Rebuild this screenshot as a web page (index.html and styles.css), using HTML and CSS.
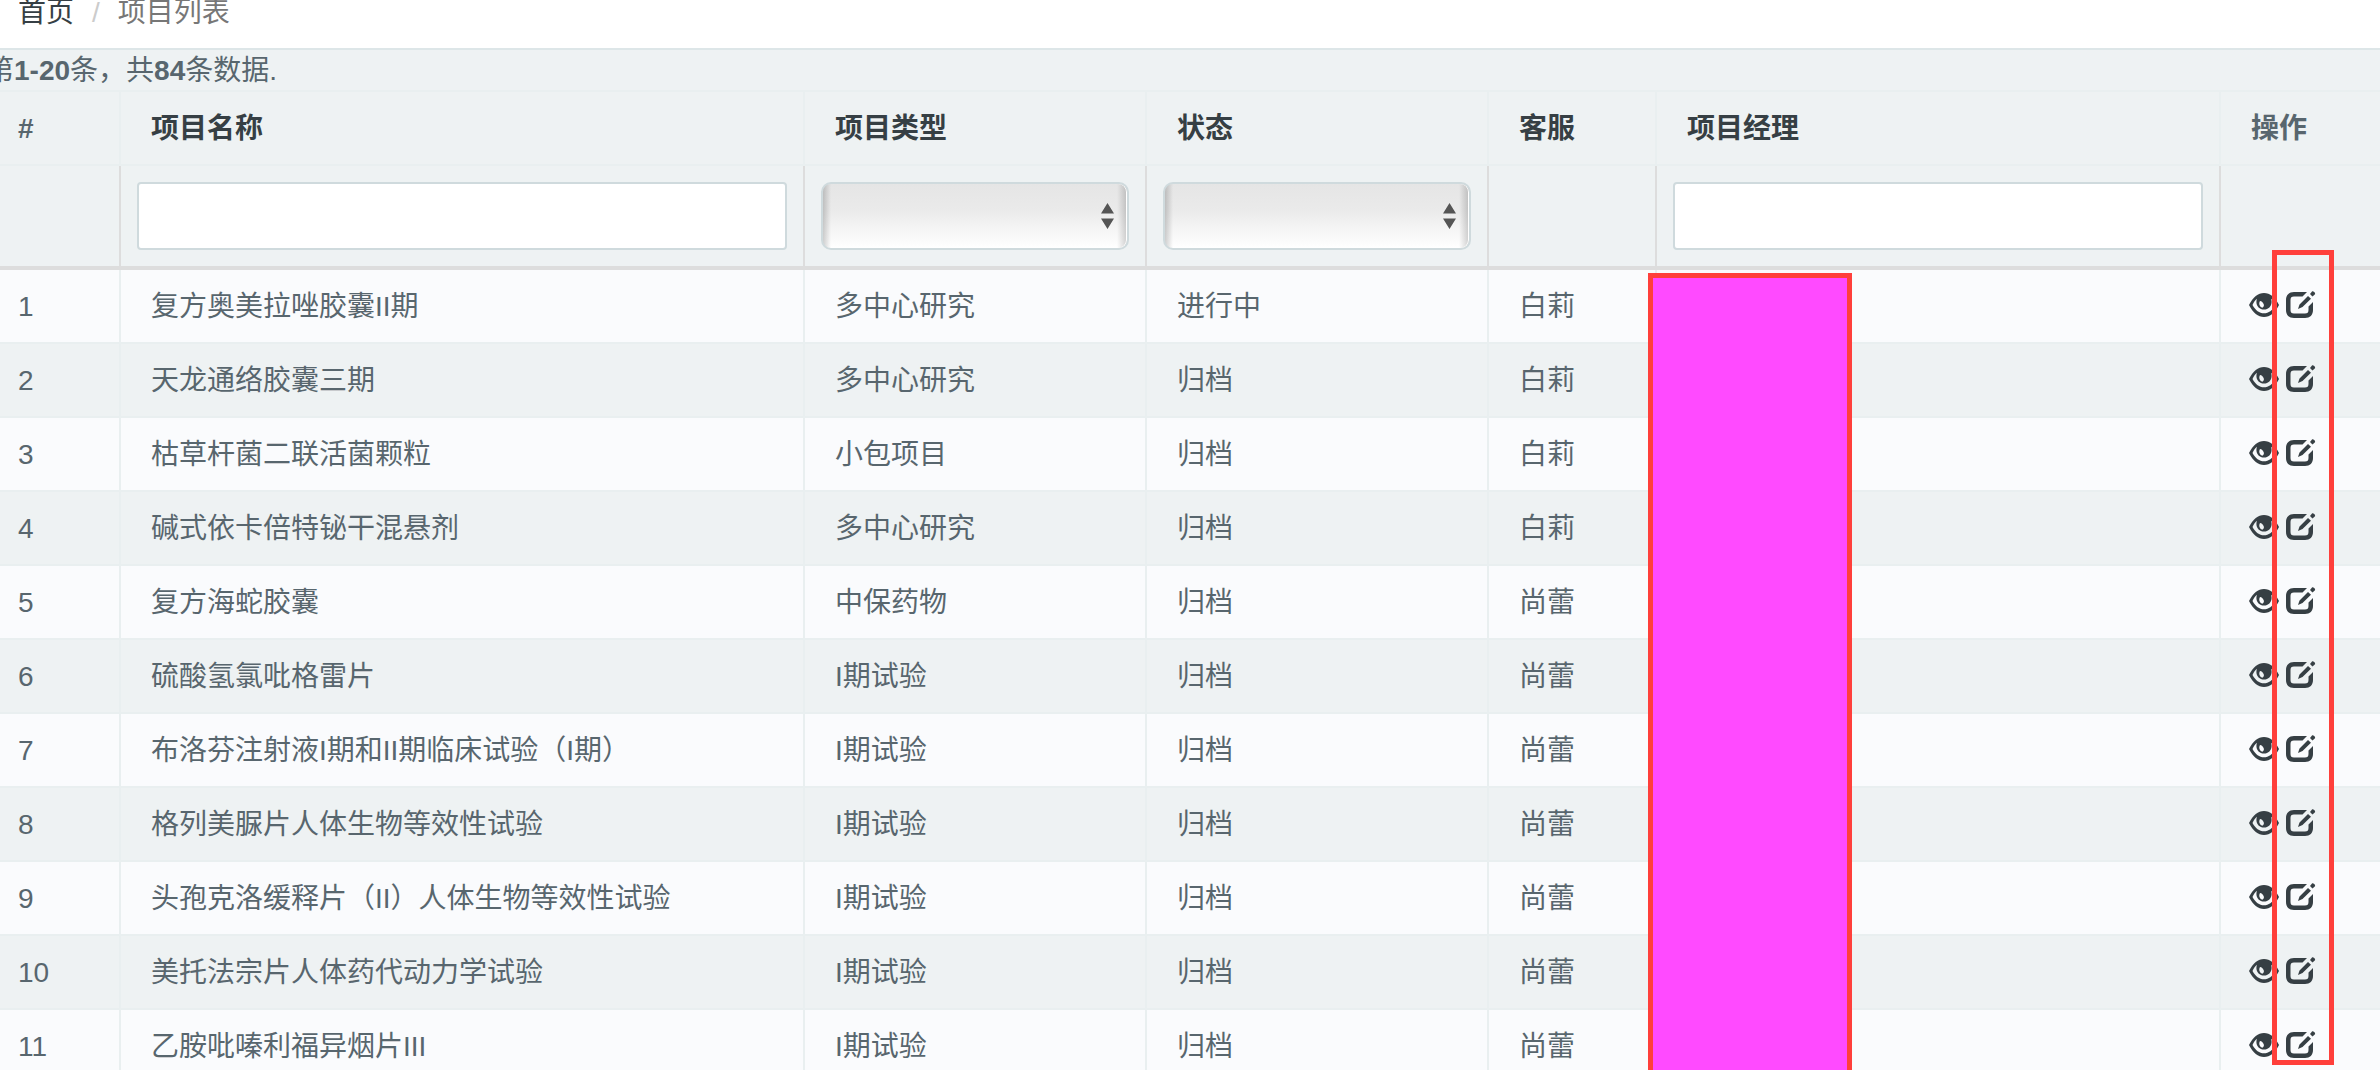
FILE: index.html
```html
<!DOCTYPE html>
<html lang="zh-CN">
<head>
<meta charset="utf-8">
<title>项目列表</title>
<link rel="stylesheet" href="styles.css">
</head>
<body>
<svg class="sprite" aria-hidden="true">
  <symbol id="eye" viewBox="0 0 30 24">
    <path fill-rule="evenodd" d="M0 12C4 4 9 0 15 0s11 4 15 12c-4 8-9 12-15 12S4 20 0 12zM3.500 12c3 5.500 6.800 8.300 11.500 8.300s8.500-2.800 11.500-8.300c-1-2.600-2.500-4.700-4.500-6.300.5 1.300.6 2 .6 3.200 0 4.400-3.300 7.600-7.600 7.600s-7.600-3.200-7.600-7.600c0-1.200.2-2.200.6-3.200C6 7.300 4.500 9.400 3.500 12zM11 8c-1.500 2.500-.5 5.800 2.300 6.800 1.600-.8 2-2.200 1.300-3.700C14 9.400 12.700 8.300 11 8z"/>
  </symbol>
  <symbol id="edit" viewBox="0 0 30 28">
    <path d="M21 1H8C3 1 0 4 0 9v10c0 5 3 8 8 8h11c5 0 8-3 8-8v-8l-4.500 4.500V19c0 2.500-1 3.500-3.500 3.500H8c-2.500 0-3.500-1-3.500-3.500V9c0-2.500 1-3.500 3.500-3.500h8.500z"/>
    <path d="M12 18l1.500-4.500 8.500-8.500 3 2.700L16.500 16zM24 3L26 .5c1-.8 3.800 1.500 3 2.800L26.500 5.500z"/>
  </symbol>
</svg>

<header class="topbar">
  <nav aria-label="面包屑">
    <ol class="breadcrumb">
      <li><a href="#">首页</a></li>
      <li class="current">项目列表</li>
    </ol>
  </nav>
</header>

<main class="content">
  <p class="summary">第<b>1-20</b>条，共<b>84</b>条数据.</p>
  <div class="grid-view">
    <table class="grid">
      <colgroup>
        <col class="col-no"><col class="col-name"><col class="col-type"><col class="col-type"><col class="col-service"><col class="col-manager"><col>
      </colgroup>
      <thead>
        <tr>
          <th>#</th>
          <th><a href="#">项目名称</a></th>
          <th><a href="#">项目类型</a></th>
          <th><a href="#">状态</a></th>
          <th><a href="#">客服</a></th>
          <th><a href="#">项目经理</a></th>
          <th>操作</th>
        </tr>
        <tr class="filters">
          <td></td>
          <td><input type="text" aria-label="项目名称"></td>
          <td><select aria-label="项目类型"><option></option></select></td>
          <td><select aria-label="状态"><option></option></select></td>
          <td></td>
          <td><input type="text" aria-label="项目经理"></td>
          <td></td>
        </tr>
      </thead>
      <tbody>
        <tr><td>1</td><td>复方奥美拉唑胶囊II期</td><td>多中心研究</td><td>进行中</td><td>白莉</td><td></td><td><span class="actions"><a href="#" aria-label="查看"><svg class="eye"><use href="#eye"/></svg></a><a href="#" aria-label="编辑"><svg class="edit"><use href="#edit"/></svg></a></span></td></tr>
        <tr><td>2</td><td>天龙通络胶囊三期</td><td>多中心研究</td><td>归档</td><td>白莉</td><td></td><td><span class="actions"><a href="#" aria-label="查看"><svg class="eye"><use href="#eye"/></svg></a><a href="#" aria-label="编辑"><svg class="edit"><use href="#edit"/></svg></a></span></td></tr>
        <tr><td>3</td><td>枯草杆菌二联活菌颗粒</td><td>小包项目</td><td>归档</td><td>白莉</td><td></td><td><span class="actions"><a href="#" aria-label="查看"><svg class="eye"><use href="#eye"/></svg></a><a href="#" aria-label="编辑"><svg class="edit"><use href="#edit"/></svg></a></span></td></tr>
        <tr><td>4</td><td>碱式依卡倍特铋干混悬剂</td><td>多中心研究</td><td>归档</td><td>白莉</td><td></td><td><span class="actions"><a href="#" aria-label="查看"><svg class="eye"><use href="#eye"/></svg></a><a href="#" aria-label="编辑"><svg class="edit"><use href="#edit"/></svg></a></span></td></tr>
        <tr><td>5</td><td>复方海蛇胶囊</td><td>中保药物</td><td>归档</td><td>尚蕾</td><td></td><td><span class="actions"><a href="#" aria-label="查看"><svg class="eye"><use href="#eye"/></svg></a><a href="#" aria-label="编辑"><svg class="edit"><use href="#edit"/></svg></a></span></td></tr>
        <tr><td>6</td><td>硫酸氢氯吡格雷片</td><td>I期试验</td><td>归档</td><td>尚蕾</td><td></td><td><span class="actions"><a href="#" aria-label="查看"><svg class="eye"><use href="#eye"/></svg></a><a href="#" aria-label="编辑"><svg class="edit"><use href="#edit"/></svg></a></span></td></tr>
        <tr><td>7</td><td>布洛芬注射液I期和II期临床试验（I期）</td><td>I期试验</td><td>归档</td><td>尚蕾</td><td></td><td><span class="actions"><a href="#" aria-label="查看"><svg class="eye"><use href="#eye"/></svg></a><a href="#" aria-label="编辑"><svg class="edit"><use href="#edit"/></svg></a></span></td></tr>
        <tr><td>8</td><td>格列美脲片人体生物等效性试验</td><td>I期试验</td><td>归档</td><td>尚蕾</td><td></td><td><span class="actions"><a href="#" aria-label="查看"><svg class="eye"><use href="#eye"/></svg></a><a href="#" aria-label="编辑"><svg class="edit"><use href="#edit"/></svg></a></span></td></tr>
        <tr><td>9</td><td>头孢克洛缓释片（II）人体生物等效性试验</td><td>I期试验</td><td>归档</td><td>尚蕾</td><td></td><td><span class="actions"><a href="#" aria-label="查看"><svg class="eye"><use href="#eye"/></svg></a><a href="#" aria-label="编辑"><svg class="edit"><use href="#edit"/></svg></a></span></td></tr>
        <tr><td>10</td><td>美托法宗片人体药代动力学试验</td><td>I期试验</td><td>归档</td><td>尚蕾</td><td></td><td><span class="actions"><a href="#" aria-label="查看"><svg class="eye"><use href="#eye"/></svg></a><a href="#" aria-label="编辑"><svg class="edit"><use href="#edit"/></svg></a></span></td></tr>
        <tr><td>11</td><td>乙胺吡嗪利福异烟片III</td><td>I期试验</td><td>归档</td><td>尚蕾</td><td></td><td><span class="actions"><a href="#" aria-label="查看"><svg class="eye"><use href="#eye"/></svg></a><a href="#" aria-label="编辑"><svg class="edit"><use href="#edit"/></svg></a></span></td></tr>
      </tbody>
    </table>
    <div class="mask"></div>
    <div class="marker"></div>
  </div>
</main>
</body>
</html>
```
FILE: styles.css
```css
* {
  box-sizing: border-box;
}

html {
  overflow: hidden;
}

body {
  margin: 0;
  background: #eef2f3;
  color: #58666e;
  font: 28px/40px "Liberation Sans", "Noto Sans CJK SC", sans-serif;
}

a {
  color: #363f44;
  text-decoration: none;
}

.sprite {
  display: none;
}

.topbar {
  margin-top: -8px;
  padding: 1px 18px 15px;
  background: #fff;
  border-bottom: 2px solid #dde6e8;
}

.breadcrumb {
  display: flex;
  margin: 0;
  padding: 0;
  list-style: none;
}

.breadcrumb .current {
  color: #777;
}

.breadcrumb .current::before {
  content: "/";
  padding: 0 18px;
  color: #ccc;
}

/* The list bleeds past the left edge of the window. */
.content {
  margin-left: -14px;
}

.summary {
  height: 40px;
  margin: 0;
  padding-top: 1px;
}

.grid-view {
  position: relative;
}

.grid {
  width: 100%;
  table-layout: fixed;
  border-collapse: separate;
  border-spacing: 0;
}

.col-no { width: 133px; }
.col-name { width: 28.572%; }
.col-type { width: 14.286%; }
.col-service { width: 168px; }
.col-manager { width: 23.559%; }

.grid th,
.grid td {
  padding: 17px 30px 15px;
  border-left: 2px solid #e9eff0;
  text-align: left;
}

.grid th {
  border-top: 2px solid #e9eff0;
  border-bottom: 2px solid #e9eff0;
}

.grid tbody td {
  border-bottom: 2px solid #e9eff0;
}

.grid tbody td:last-child {
  padding-left: 28px;
}

.grid .filters td {
  height: 104px;
  padding: 16px;
  border-left-color: #ddd;
  border-bottom: 4px solid #ddd;
}

.grid tbody tr:nth-child(odd) {
  background: #fafbfd;
}

input,
select {
  display: block;
  width: 100%;
  height: 68px;
  padding: 12px 24px;
  border: 2px solid #cfdadd;
  border-radius: 4px;
  background: #fff;
  color: inherit;
  font: inherit;
}

select {
  appearance: none;
  border-radius: 10px;
  background:
    url("data:image/svg+xml,%3Csvg xmlns='http://www.w3.org/2000/svg' width='13' height='26'%3E%3Cpath fill='%23555' d='M0 10.500L6.500 0 13 10.500zM0 15.500h13L6.500 26z'/%3E%3C/svg%3E") right 13px center no-repeat,
    linear-gradient(to right, rgba(0, 0, 0, 0.18), transparent) left / 8px 100% no-repeat,
    linear-gradient(to left, rgba(0, 0, 0, 0.18), transparent) right / 10px 100% no-repeat,
    linear-gradient(#e5e5e5, #eaeaea 40%, #fff);
  box-shadow: inset -1px 0 0 #fff;
}

.actions {
  display: flex;
  align-items: center;
  gap: 7px;
  height: 40px;
  padding-bottom: 4px;
}

.actions svg {
  display: block;
  fill: #363f44;
}

.eye {
  width: 30px;
  height: 24px;
}

.edit {
  width: 30px;
  height: 28px;
}

.mask,
.marker {
  position: absolute;
  border: 5px solid #ff3f3b;
}

.mask {
  top: 183px;
  bottom: 0;
  left: 1662px;
  width: 204px;
  border-bottom: 0;
  background: #ff4aff;
}

.marker {
  top: 160px;
  right: 46px;
  width: 62px;
  height: 815px;
}
```
